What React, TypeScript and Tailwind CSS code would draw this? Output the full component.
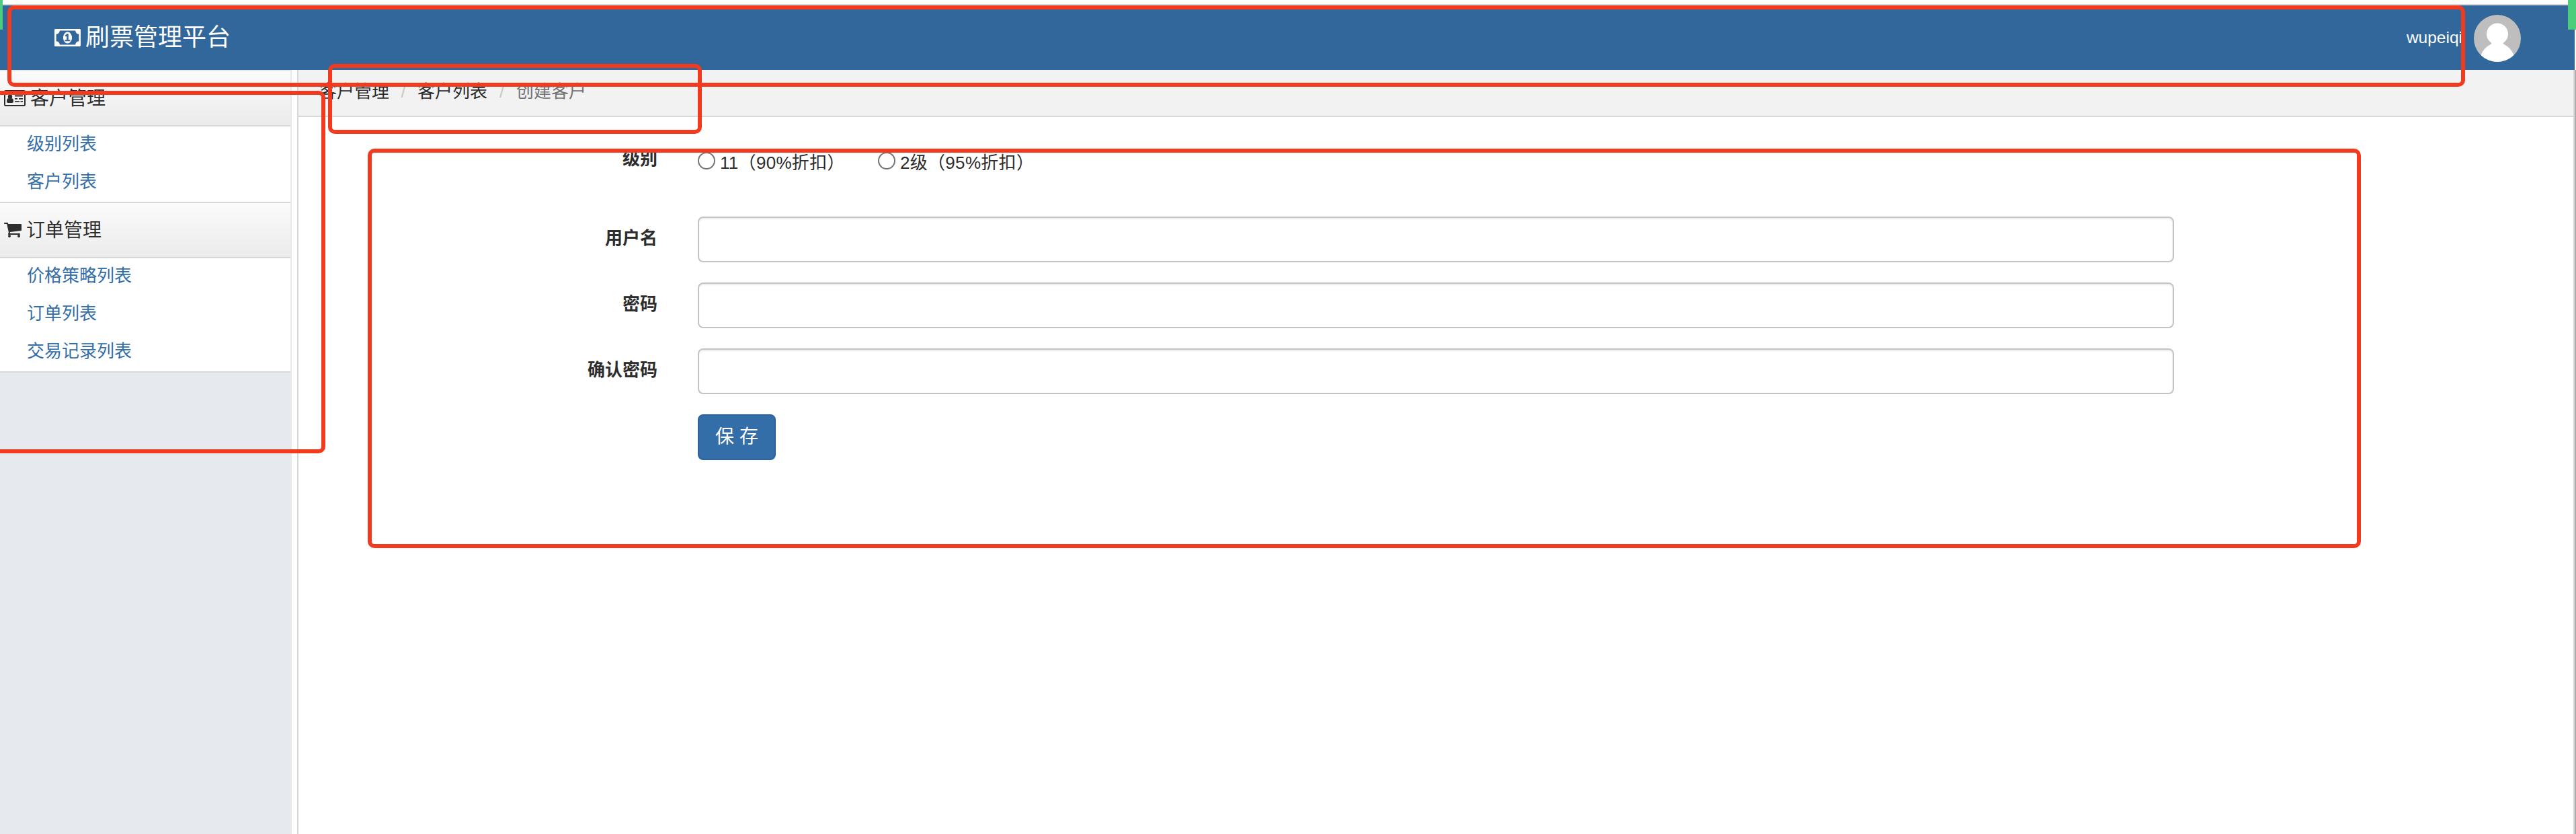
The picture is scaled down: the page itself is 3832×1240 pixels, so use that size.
import type { ReactNode } from "react";

const FONT =
  "font-['Liberation_Sans','Noto_Sans_CJK_SC',sans-serif]";

function MoneyIcon() {
  return (
    <svg viewBox="0 256 1920 1280" className="h-[26px] w-[39px] shrink-0 fill-current">
      <path d="M768 1152h384v-96h-128v-448h-114l-148 137 77 80q42-37 55-57h2v288h-128v96zm512-256q0 70-21 142t-59.5 134-101.5 101-138 39-138-39-101.5-101-59.5-134-21-142 21-142 59.5-134 101.5-101 138-39 138 39 101.5 101 59.5 134 21 142zm512 256v-512q-106 0-181-75t-75-181h-1152q0 106-75 181t-181 75v512q106 0 181 75t75 181h1152q0-106 75-181t181-75zm128-832v1152q0 26-19 45t-45 19h-1792q-26 0-45-19t-19-45v-1152q0-26 19-45t45-19h1792q26 0 45 19t19 45z" />
    </svg>
  );
}

function CardIcon() {
  return (
    <svg viewBox="0 0 32 24" className="h-[24px] w-[32px] shrink-0 fill-current">
      <path
        fillRule="evenodd"
        d="M2.500 0h27A2.500 2.500 0 0 1 32 2.500v19a2.500 2.500 0 0 1-2.500 2.500h-27A2.500 2.500 0 0 1 0 21.500v-19A2.500 2.500 0 0 1 2.500 0zM2 3v18.500a.5.5 0 0 0 .5.5h27a.5.5 0 0 0 .5-.5V3z"
      />
      <circle cx="9" cy="9.800" r="3.200" />
      <path d="M6.500 12q2.500 2 5 0Q14 12.300 14 16.500q0 2.500-2 2.500H6q-2 0-2-2.500Q4 12.300 6.500 12z" />
      <path d="M16 7.500h12v2H16zM16 12h4v1.700h-4zM22 12h6v1.700h-6zM16 16.300h7v1.700h-7zM24.500 16.300H28v1.700h-3.500z" />
    </svg>
  );
}

function CartIcon() {
  return (
    <svg viewBox="64 256 1664 1408" className="h-[22px] w-[26px] shrink-0 fill-current">
      <path d="M704 1536q0 52-38 90t-90 38-90-38-38-90 38-90 90-38 90 38 38 90zm896 0q0 52-38 90t-90 38-90-38-38-90 38-90 90-38 90 38 38 90zm128-1088v512q0 24-16.5 42.5t-40.5 21.5l-1044 122q13 60 13 70 0 16-24 64h920q26 0 45 19t19 45-19 45-45 19h-1024q-26 0-45-19t-19-45q0-11 8-31.500t16-36 21.500-40 15.500-29.500l-177-823h-204q-26 0-45-19t-19-45 19-45 45-19h256q16 0 28.500 6.500t19.500 15.500 13 24.500 8 26 5.500 29.500 4.500 26h1201q26 0 45 19t19 45z" />
    </svg>
  );
}

function Avatar() {
  return (
    <svg viewBox="0 0 70 70" className="h-[70px] w-[70px] rounded-full bg-[#bebebe] fill-white">
      <circle cx="35" cy="28.500" r="16" />
      <path d="M27 40h16q0 3 3 4.500Q55 49 59.500 60L60 72H10l.5-12Q15 49 24 44.500q3-1.500 3-4.500z" />
    </svg>
  );
}

function MenuGroup({ icon, title, items }: { icon: ReactNode; title: string; items: string[] }) {
  return (
    <section className="border-b-2 border-[#d8d8d8] bg-white">
      <h2 className="flex h-[82px] items-center gap-[7px] border-b-2 border-[#d8d8d8] bg-linear-to-b from-[#fbfbfb] to-[#ebebeb] pl-1.5 text-[28px] leading-none">
        {icon}
        <span className="pt-0.5">{title}</span>
      </h2>
      <ul>
        {items.map((item) => (
          <li key={item} className="h-14 pl-10 text-[26px] leading-[53px] text-[#346ea9]">
            <a>{item}</a>
          </li>
        ))}
      </ul>
    </section>
  );
}

function Field({ label }: { label: string }) {
  return (
    <label className="flex h-[98px] items-start">
      <span className="w-[534px] text-right text-[26px] font-bold leading-[64px]">{label}</span>
      <input className="ml-[60px] h-[68px] w-[2196px] rounded-lg border-2 border-[#c4c4c4] bg-white shadow-[inset_0_2px_2px_rgba(0,0,0,0.075)]" />
    </label>
  );
}

function Radio({ label }: { label: string }) {
  return (
    <label className="flex w-[268px] items-start">
      <input type="radio" name="level" className="h-[26px] w-[26px] shrink-0 appearance-none rounded-full border-2 border-[#767676] bg-white" />
      <span className="ml-[7px] whitespace-nowrap pt-[3px] text-[26px] leading-[26px] tracking-[0.3px]">{label}</span>
    </label>
  );
}

export default function App() {
  return (
    <div className={`relative flex h-[1240px] w-[3832px] flex-col overflow-hidden bg-white text-[#2d2d2d] ${FONT}`}>
      <div className="h-2 shrink-0 border-b-2 border-[#d8d8d8]" />
      <header className="mr-0.5 flex h-24 shrink-0 items-center justify-between bg-[#32679c] pl-[81px] pr-20 text-white">
        <div className="flex items-center gap-[7px] text-[36px] leading-none">
          <MoneyIcon />
          <span>刷票管理平台</span>
        </div>
        <div className="flex items-center gap-[17px] pt-0.5 text-[24.500px] leading-none">
          <span className="pb-0.5">wupeiqi</span>
          <Avatar />
        </div>
      </header>

      <div className="flex flex-1">
        <aside className="w-[434px] shrink-0 border-r-2 border-t-2 border-[#e6e9ee] bg-[#e6e9ee]">
          <MenuGroup icon={<CardIcon />} title="客户管理" items={["级别列表", "客户列表"]} />
          <MenuGroup icon={<CartIcon />} title="订单管理" items={["价格策略列表", "订单列表", "交易记录列表"]} />
        </aside>

        <main className="ml-2 w-[3388px] border-x-2 border-[#d8d8d8]">
          <nav className="flex h-[70px] border-b-2 border-[#d8d8d8] bg-[#f2f2f2] pl-[31px] text-[26px] leading-[65px]">
            <span>客户管理</span>
            <span className="w-[42px] text-center text-[#c8c8c8]">/</span>
            <span>客户列表</span>
            <span className="w-[43px] text-center text-[#c8c8c8]">/</span>
            <span className="text-[#737373]">创建客户</span>
          </nav>

          <form className="pt-[52px]">
            <div className="flex h-24 items-start">
              <span className="w-[534px] text-right text-[26px] font-bold leading-[20px]">级别</span>
              <div className="ml-[60px] flex">
                <Radio label="11（90%折扣）" />
                <Radio label="2级（95%折扣）" />
              </div>
            </div>
            <Field label="用户名" />
            <Field label="密码" />
            <Field label="确认密码" />
            <button type="button" className="ml-[594px] block h-[68px] w-[116px] rounded-lg border-2 border-[#2f6299] bg-[#346ea9] text-[28px] leading-none text-white">
              保 存
            </button>
          </form>
        </main>
        <div className="w-0.5 bg-[#aeaeae]" />
      </div>

      {/* Edge markers */}
      <div className="absolute left-0 top-0 h-11 w-1 bg-[#4bcd7b]" />
      <div className="absolute right-0 top-0 h-11 w-3 bg-[#4bcd7b]" />

      {/* Highlight frames over the header, menu, breadcrumb and form */}
      <div className="pointer-events-none absolute left-[11px] top-2 h-[121px] w-[3656px] rounded-[10px] border-[6px] border-[#f23b1e]" />
      <div className="pointer-events-none absolute -left-5 top-[135px] h-[539px] w-[504px] rounded-[10px] border-[6px] border-[#f23b1e]" />
      <div className="pointer-events-none absolute left-[488px] top-[95px] h-[104px] w-[556px] rounded-[10px] border-[6px] border-[#f23b1e]" />
      <div className="pointer-events-none absolute left-[547px] top-[221px] h-[594px] w-[2965px] rounded-[10px] border-[6px] border-[#f23b1e]" />
    </div>
  );
}
